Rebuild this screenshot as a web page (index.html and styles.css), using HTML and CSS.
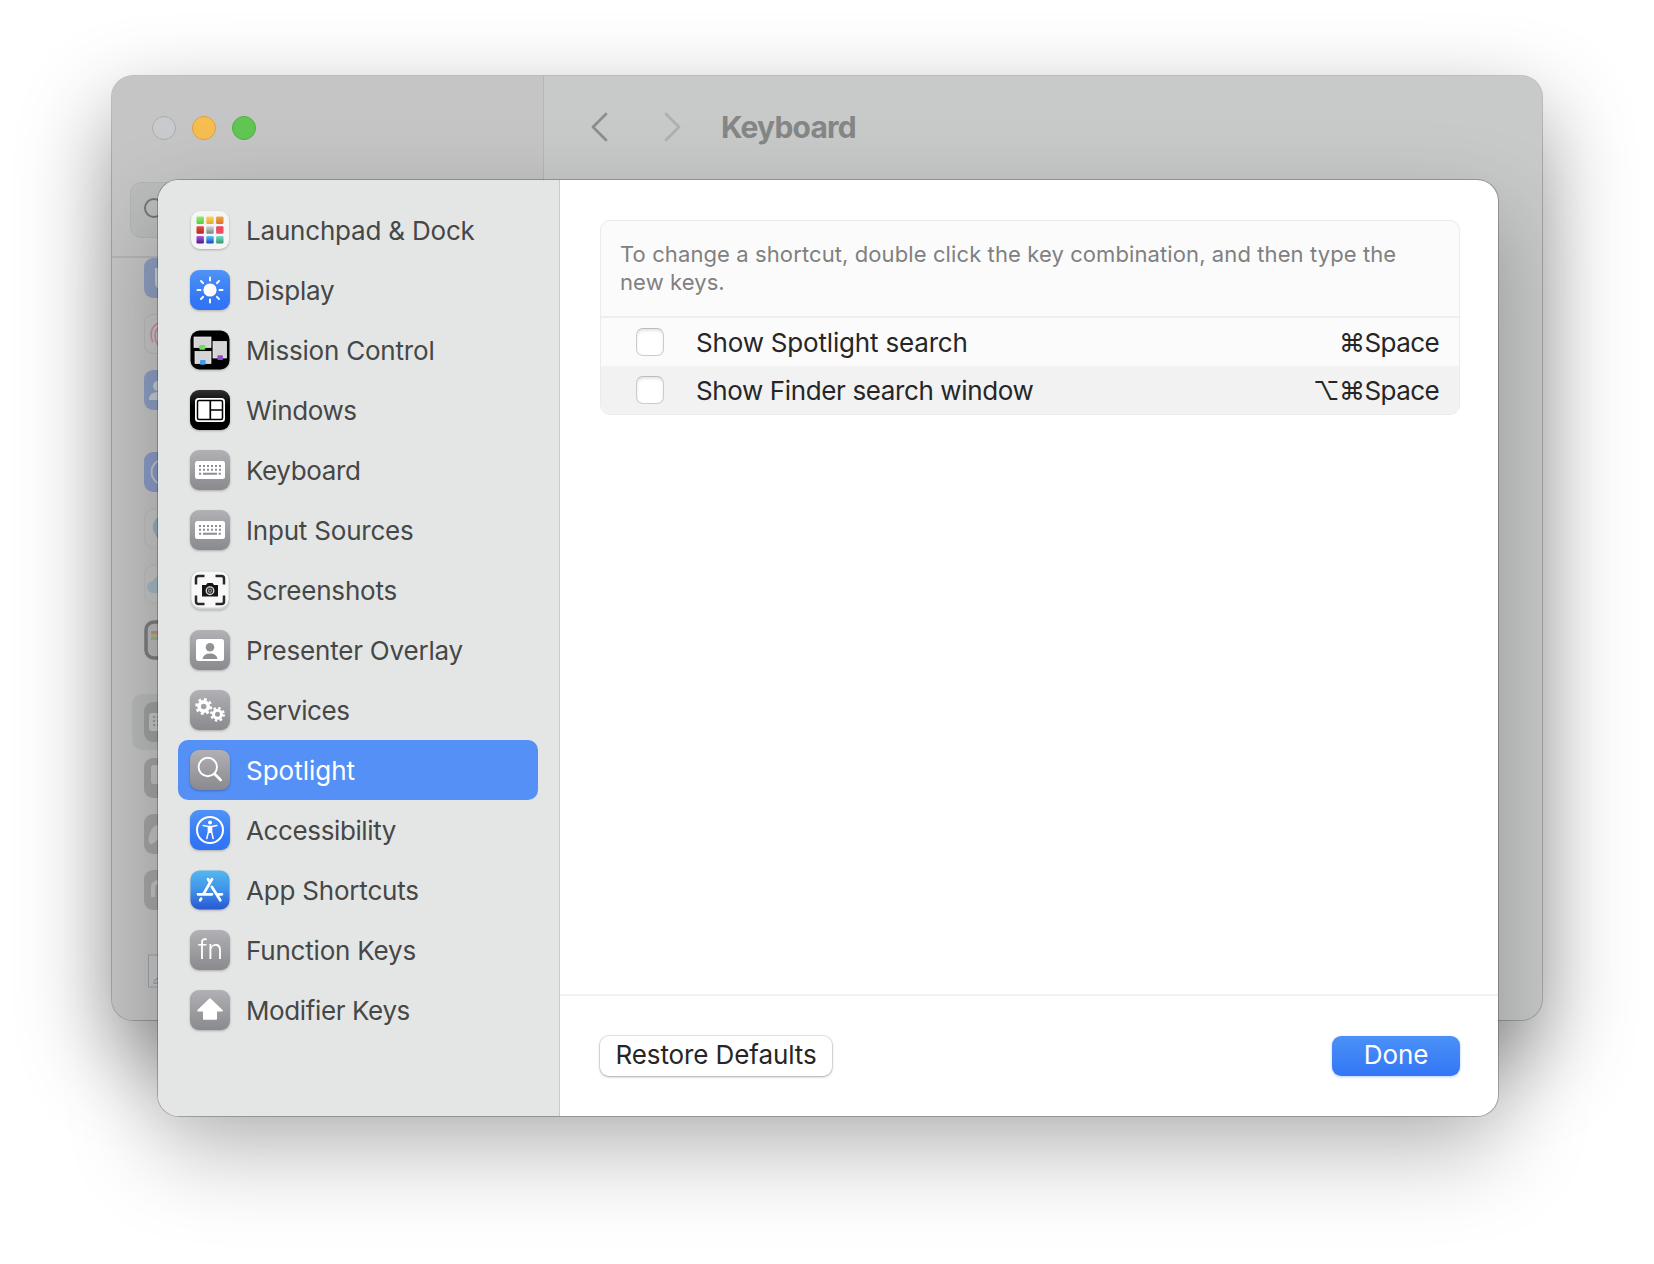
FILE: index.html
```html
<!DOCTYPE html>
<html lang="en">
<head>
    <meta charset="UTF-8">
    <meta name="viewport" content="width=device-width, initial-scale=1.0">
    <title>Keyboard</title>
    <link rel="stylesheet" href="styles.css">
</head>
<body>
    <!-- Settings window behind the sheet -->
    <div class="window">
        <div class="window-sidebar">
            <div class="lights">
                <span class="light"></span>
                <span class="light yellow"></span>
                <span class="light green"></span>
            </div>
            <div class="search">
                <svg width="30" height="30" viewBox="0 0 30 30" fill="none" stroke="#747675" stroke-width="2"><circle cx="10" cy="10" r="9"/><path d="M17 17l7 7"/></svg>
            </div>
            <div class="back-list">
                <div class="back-group">
                    <div class="back-row"><svg class="back-icon" viewBox="0 0 40 40"><rect width="40" height="40" rx="9" fill="#8d9fc0"/><path d="M13 10v14q0 6 7 6" fill="none" stroke="#c9cdd5" stroke-width="4"/></svg></div>
                    <div class="back-row"><svg class="back-icon" viewBox="0 0 40 40"><rect x=".5" y=".5" width="39" height="39" rx="9" fill="#c6c6c6" stroke="#b8b8b8"/><g fill="none" stroke="#c88f9a" stroke-width="1.6"><path d="M16 8q-9 4-9 13 0 4 2 7M17 12q-6 3-6 10 0 5 3 9M18 16q-3 2-3 7 0 5 2 9"/></g></svg></div>
                    <div class="back-row"><svg class="back-icon" viewBox="0 0 40 40"><rect width="40" height="40" rx="9" fill="#8d9fc4"/><circle cx="14" cy="16" r="5" fill="#c4cad6"/><path d="M5 30q0-8 9-8t9 8z" fill="#c4cad6"/></svg></div>
                </div>
                <div class="back-group">
                    <div class="back-row"><svg class="back-icon" viewBox="0 0 40 40"><rect width="40" height="40" rx="9" fill="#8b9cc6"/><circle cx="20" cy="20" r="12.5" fill="none" stroke="#c0c5d0" stroke-width="2"/></svg></div>
                    <div class="back-row"><svg class="back-icon" viewBox="0 0 40 40"><rect x="1" y="1" width="39" height="39" rx="9" fill="#c6c6c6" stroke="#bbb"/><path d="M20 7a12 12 0 0 0-8 20l8 1z" fill="#93b0c2"/><path d="M12 27q3 6 9 6v-6z" fill="#9583b3"/></svg></div>
                    <div class="back-row"><svg class="back-icon" viewBox="0 0 40 40"><rect x="1" y="1" width="39" height="38" rx="9" fill="#c6c6c6" stroke="#bbb"/><path d="M9 29a6 6 0 0 1 0-12 6 6 0 0 1 8-4v16z" fill="#a5b9c5"/></svg></div>
                    <div class="back-row"><svg class="back-icon" viewBox="0 0 40 40"><rect x="2" y="2" width="37" height="36" rx="8" fill="#bbb" stroke="#7e7e7e" stroke-width="3.5"/><path d="M7 11h12v3H7z" fill="#b89488"/><path d="M7 14h12v3H7z" fill="#bfb186"/><path d="M7 17h12v3H7z" fill="#93b397"/></svg></div>
                </div>
                <div class="back-group">
                    <div class="back-row current"><svg class="back-icon" viewBox="0 0 40 40"><rect width="40" height="40" rx="9" fill="#a0a2a2"/><rect x="5" y="11" width="30" height="18" rx="3" fill="#c4c6c5"/><path d="M9 15h2M9 19h2M9 23h2M13 15h2M13 19h2M13 23h2" stroke="#9a9c9c" stroke-width="2"/></svg></div>
                    <div class="back-row"><svg class="back-icon" viewBox="0 0 40 40"><rect width="40" height="40" rx="9" fill="#a4a4a4"/><rect x="7" y="7" width="26" height="19" rx="3" fill="#c3c3c3"/></svg></div>
                    <div class="back-row"><svg class="back-icon" viewBox="0 0 40 40"><rect width="40" height="40" rx="9" fill="#a6a6a6"/><path d="M6 30q-3-3 0-11 3-8 8-8v14q-4 5-8 5z" fill="#c3c3c3"/></svg></div>
                    <div class="back-row"><svg class="back-icon" viewBox="0 0 40 40"><rect width="40" height="40" rx="9" fill="#a8a8a8"/><path d="M9 27V18q0-6 6-6" fill="none" stroke="#c4c4c4" stroke-width="4"/></svg></div>
                </div>
                <svg class="back-doc" width="32" height="34" viewBox="0 0 32 34"><rect x=".5" y="1" width="31" height="32" fill="#c8c8c8" stroke="#9aa6ae"/><path d="M6 27l4-3M5 29h5" stroke="#8f8f8f"/></svg>
            </div>
        </div>
        <div class="window-main">
            <div class="toolbar">
                <svg width="90" height="30" viewBox="0 0 90 30" fill="none" stroke-width="2.8" stroke-linecap="round" stroke-linejoin="round"><path d="M15 2L2 15l13 13" stroke="#8c8d8d"/><path d="M75 2l13 13-13 13" stroke="#aeb0af"/></svg>
                <h1>Keyboard</h1>
            </div>
        </div>
    </div>

    <!-- Keyboard shortcuts sheet -->
    <div class="sheet">
        <ul class="sidebar">
            <li>
                <svg class="icon" viewBox="0 0 40 40">
                    <defs>
                        <linearGradient id="gray" x2="0" y2="1"><stop stop-color="#b1b0b5"/><stop offset="1" stop-color="#8a898e"/></linearGradient>
                        <linearGradient id="blue" x2="0" y2="1"><stop stop-color="#4f93f8"/><stop offset=".7" stop-color="#3478f6"/><stop offset="1" stop-color="#3073f5"/></linearGradient>
                        <linearGradient id="store" x2="0" y2="1"><stop stop-color="#55b7ef"/><stop offset=".5" stop-color="#3f92e9"/><stop offset="1" stop-color="#2857d2"/></linearGradient>
                        <linearGradient id="black" x2="0" y2="1"><stop stop-color="#303030"/><stop offset=".4" stop-color="#000"/></linearGradient>
                        <linearGradient id="c1" x2="0" y2="1"><stop stop-color="#8fee70"/><stop offset="1" stop-color="#53cf45"/></linearGradient>
                        <linearGradient id="c2" x2="0" y2="1"><stop stop-color="#f9d75c"/><stop offset="1" stop-color="#e9a53a"/></linearGradient>
                        <linearGradient id="c3" x2="0" y2="1"><stop stop-color="#eda743"/><stop offset="1" stop-color="#df7130"/></linearGradient>
                        <linearGradient id="c4" x2="0" y2="1"><stop stop-color="#e44c3c"/><stop offset="1" stop-color="#b3281f"/></linearGradient>
                        <linearGradient id="c5" x2="0" y2="1"><stop stop-color="#d2d6da"/><stop offset="1" stop-color="#7b8085"/></linearGradient>
                        <linearGradient id="c6" x2="0" y2="1"><stop stop-color="#e8465c"/><stop offset="1" stop-color="#ee5266"/></linearGradient>
                        <linearGradient id="c7" x2="0" y2="1"><stop stop-color="#a95be0"/><stop offset="1" stop-color="#4d1583"/></linearGradient>
                        <linearGradient id="c8" x2="0" y2="1"><stop stop-color="#55c6f8"/><stop offset="1" stop-color="#1c3fc0"/></linearGradient>
                        <linearGradient id="c9" x2="0" y2="1"><stop stop-color="#74dcd0"/><stop offset="1" stop-color="#3b9568"/></linearGradient>
                    </defs>
                    <rect x="1" y="1" width="38" height="38" rx="9" fill="#f5f5f5"/>
                    <g>
                        <rect x="6.500" y="6.500" width="7.400" height="7.400" rx="1.200" fill="url(#c1)"/><rect x="16.300" y="6.500" width="7.400" height="7.400" rx="1.200" fill="url(#c2)"/><rect x="26.100" y="6.500" width="7.400" height="7.400" rx="1.200" fill="url(#c3)"/>
                        <rect x="6.500" y="16.300" width="7.400" height="7.400" rx="1.200" fill="url(#c4)"/><rect x="16.300" y="16.300" width="7.400" height="7.400" rx="1.200" fill="url(#c5)"/><rect x="26.100" y="16.300" width="7.400" height="7.400" rx="1.200" fill="url(#c6)"/>
                        <rect x="6.500" y="26.100" width="7.400" height="7.400" rx="1.200" fill="url(#c7)"/><rect x="16.300" y="26.100" width="7.400" height="7.400" rx="1.200" fill="url(#c8)"/><rect x="26.100" y="26.100" width="7.400" height="7.400" rx="1.200" fill="url(#c9)"/>
                    </g>
                </svg>
                <span>Launchpad &amp; Dock</span>
            </li>
            <li>
                <svg class="icon" viewBox="0 0 40 40"><rect width="40" height="40" rx="9" fill="url(#blue)"/><circle cx="20" cy="20" r="6.600" fill="#fff"/><path d="M20 7.500v3M20 29.500v3M7.500 20h3M29.500 20h3M11 11l2.100 2.100M26.900 26.900L29 29M29 11l-2.100 2.100M13.100 26.900L11 29" stroke="#fff" stroke-width="2" stroke-linecap="round"/></svg>
                <span>Display</span>
            </li>
            <li>
                <svg class="icon" viewBox="0 0 40 40"><rect x=".5" y=".5" width="39" height="39" rx="9" fill="#000"/><g fill="#d5d5d5" stroke="#f2f2f2" stroke-width=".7"><rect x="4" y="7" width="17" height="10.500"/><rect x="5" y="21.500" width="16" height="12"/><rect x="23" y="11.500" width="13.500" height="16.500"/></g><rect x="9.300" y="15" width="6" height="4.800" rx="1" fill="#6fdd57"/><rect x="10" y="30" width="5.600" height="4.800" rx="1" fill="#3f9bf2"/><rect x="27.400" y="25.300" width="5.600" height="4.800" rx="1" fill="#9350cd"/></svg>
                <span>Mission Control</span>
            </li>
            <li>
                <svg class="icon" viewBox="0 0 40 40"><rect width="40" height="40" rx="9" fill="url(#black)"/><rect x="5" y="8" width="30" height="24" rx="3.500" fill="#fff"/><rect x="7.500" y="10.500" width="25" height="19" rx="1.500" fill="none" stroke="#000" stroke-width="1.500"/><path d="M20.300 10.500v19M20.300 20h12.200" stroke="#000" stroke-width="1.700"/></svg>
                <span class="tight">Windows</span>
            </li>
            <li>
                <svg class="icon" viewBox="0 0 40 40"><rect width="40" height="40" rx="9" fill="url(#gray)"/><rect x="5" y="11" width="30" height="18" rx="2.500" fill="#fff"/><path d="M9 16h23M9 19.800h23" stroke="#8e8d92" stroke-width="2" stroke-dasharray="2 2"/><path d="M9 23.700h2.200M13 23.700h14M28.600 23.700h2.200" stroke="#8e8d92" stroke-width="2"/></svg>
                <span class="tight">Keyboard</span>
            </li>
            <li>
                <svg class="icon" viewBox="0 0 40 40"><rect width="40" height="40" rx="9" fill="url(#gray)"/><rect x="5" y="11" width="30" height="18" rx="2.500" fill="#fff"/><path d="M9 16h23M9 19.800h23" stroke="#8e8d92" stroke-width="2" stroke-dasharray="2 2"/><path d="M9 23.700h2.200M13 23.700h14M28.600 23.700h2.200" stroke="#8e8d92" stroke-width="2"/></svg>
                <span>Input Sources</span>
            </li>
            <li>
                <svg class="icon" viewBox="0 0 40 40"><rect x="1" y="1" width="38" height="38.500" rx="9" fill="#d2d2d2"/><rect x="1.500" y="1.500" width="37" height="36" rx="8.500" fill="#f8f8f8"/><path d="M6 14.500V8.500q0-2.500 2.500-2.500h6M25.500 6h6q2.500 0 2.500 2.500v6M34 25.500v6q0 2.500-2.500 2.500h-6M14.500 34h-6Q6 34 6 31.500v-6" fill="none" stroke="#282828" stroke-width="2.500"/><path d="M12 15h4l1.500-2h5l1.500 2h4v11.500H12z" fill="#151515"/><circle cx="20" cy="20.700" r="3.800" fill="#333" stroke="#ddd" stroke-width="1.300"/><circle cx="20" cy="20.700" r="1.600" fill="none" stroke="#bbb" stroke-width=".8"/></svg>
                <span>Screenshots</span>
            </li>
            <li>
                <svg class="icon" viewBox="0 0 40 40"><rect width="40" height="40" rx="9" fill="url(#gray)"/><rect x="6" y="9" width="28" height="22" rx="2.500" fill="#fff"/><circle cx="20" cy="17.300" r="4.300" fill="#939297"/><path d="M12.500 29q1-5.500 7.500-5.500t7.500 5.500z" fill="#8e8d92"/></svg>
                <span>Presenter Overlay</span>
            </li>
            <li>
                <svg class="icon" viewBox="0 0 40 40"><rect width="40" height="40" rx="9" fill="url(#gray)"/><g fill="none" stroke="#fff"><circle cx="13.700" cy="16.500" r="4.600" stroke-width="3.600"/><circle cx="13.700" cy="16.500" r="7.300" stroke-width="2.400" stroke-dasharray="2.870 2.863"/><circle cx="27.500" cy="24.300" r="4" stroke-width="3"/><circle cx="27.500" cy="24.300" r="6.300" stroke-width="2.200" stroke-dasharray="2.470 2.478"/></g></svg>
                <span class="tight">Services</span>
            </li>
            <li class="selected">
                <svg class="icon" viewBox="0 0 40 40"><rect width="40" height="40" rx="9" fill="url(#gray)"/><circle cx="17.800" cy="17" r="9.200" fill="none" stroke="#fff" stroke-width="1.900"/><path d="M24.700 23.900l6 6" stroke="#fff" stroke-width="2.800" stroke-linecap="round"/></svg>
                <span>Spotlight</span>
            </li>
            <li>
                <svg class="icon" viewBox="0 0 40 40"><rect width="40" height="40" rx="9" fill="url(#blue)"/><circle cx="20" cy="20" r="13" fill="none" stroke="#fff" stroke-width="2"/><circle cx="20" cy="12.600" r="2" fill="#fff"/><path d="M13.200 15.600l5 1h3.600l5-1M18.400 16.500v5.500l-1.600 6.500M21.600 16.500V22l1.600 6.500" fill="none" stroke="#fff" stroke-width="1.500" stroke-linecap="round"/><path d="M18 16.500h4v6.500h-4z" fill="#fff"/></svg>
                <span class="tight">Accessibility</span>
            </li>
            <li>
                <svg class="icon" viewBox="0 0 40 40"><rect x=".5" y=".5" width="39" height="39" rx="9" fill="url(#store)"/><g stroke="#fff" stroke-width="2.700" stroke-linecap="round"><path d="M22 9.200L13.800 23.500M18 9.200l2 3.500M21.800 16.800l8.500 13.500M8 24.300h14M28.200 24.300H32M11.200 28.600l-1 1.700"/></g></svg>
                <span>App Shortcuts</span>
            </li>
            <li>
                <svg class="icon" viewBox="0 0 40 40"><rect width="40" height="40" rx="9" fill="url(#gray)"/><text class="fn" x="20.500" y="28.700" text-anchor="middle">fn</text></svg>
                <span>Function Keys</span>
            </li>
            <li>
                <svg class="icon" viewBox="0 0 40 40"><rect width="40" height="40" rx="9" fill="url(#gray)"/><path d="M20 9L32 20.600H26.200V29H13.800V20.600H8z" fill="#fff" stroke="#fff" stroke-width="1.600" stroke-linejoin="round"/></svg>
                <span class="tight">Modifier Keys</span>
            </li>
        </ul>

        <div class="content">
            <div class="panel-area">
                <div class="panel">
                    <p class="hint">To change a shortcut, double click the key combination, and then type the<br>new keys.</p>
                    <label class="shortcut">
                        <input type="checkbox">
                        <span class="name">Show Spotlight search</span>
                        <span class="keys">⌘Space</span>
                    </label>
                    <label class="shortcut">
                        <input type="checkbox">
                        <span class="name tight">Show Finder search window</span>
                        <span class="keys">⌥⌘Space</span>
                    </label>
                </div>
            </div>
            <div class="footer">
                <button class="restore-btn">Restore Defaults</button>
                <button class="done-btn">Done</button>
            </div>
        </div>
    </div>
</body>
</html>
```

FILE: styles.css
```css
* {
    box-sizing: border-box;
}
body {
    margin: 0;
    height: 1264px;
    padding: 76px 112px 0;
    background: #fff;
    font-family: Inter, "Liberation Sans", sans-serif;
    font-size: 26px;
    overflow: hidden;
    position: relative;
}

/* Window behind the sheet */
.window {
    display: flex;
    width: 1430px;
    height: 944px;
    border-radius: 21px;
    overflow: hidden;
    background: #c8cac9;
    box-shadow: 0 0 0 1px rgba(0, 0, 0, 0.2), 0 36px 90px rgba(0, 0, 0, 0.42);
}
.window-sidebar {
    width: 432px;
    padding: 40px 20px 0;
    background: #c5c5c5;
    border-right: 1px solid #b5b7b6;
}
.lights {
    display: flex;
    gap: 16px;
    padding-left: 20px;
}
.light {
    width: 24px;
    height: 24px;
    border-radius: 50%;
    background: #c8cacd;
    border: 1px solid #aaacae;
}
.yellow {
    background: #f6be50;
    border-color: #dfa33e;
}
.green {
    background: #62c655;
    border-color: #51ad43;
}
.search {
    height: 56px;
    margin: 42px 0 18px -2px;
    padding: 15px 13px;
    border-radius: 11px;
    background: #bbbebc;
    border: 1px solid #b3b6b4;
}
.search svg {
    display: block;
}
.back-list {
    margin: 0 -20px;
    padding-left: 20px;
    border-top: 2px solid #b5b5b5;
}
.back-group {
    margin-bottom: 26px;
}
.back-group:first-child {
    margin-top: -8px;
}
.back-row {
    height: 56px;
    padding: 8px 12px;
    width: 392px;
    border-radius: 10px;
}
.current {
    background: #b9bcba;
}
.back-icon {
    display: block;
    width: 40px;
    height: 40px;
}
.back-doc {
    display: block;
    margin: 36px 0 0 16px;
}
.toolbar {
    display: flex;
    align-items: center;
    height: 102px;
    padding-left: 47px;
}
h1 {
    margin: 0 0 0 40px;
    font-size: 30px;
    font-weight: 700;
    letter-spacing: -0.8px;
    color: #858686;
}

/* Sheet */
.sheet {
    position: absolute;
    left: 158px;
    top: 180px;
    display: flex;
    width: 1340px;
    height: 936px;
    border-radius: 21px;
    background: #fff;
    box-shadow: 0 0 0 1px rgba(0, 0, 0, 0.24), 0 36px 90px rgba(0, 0, 0, 0.27);
}
.sidebar {
    width: 402px;
    margin: 0;
    padding: 20px;
    list-style: none;
    background: #e4e6e5;
    border-right: 1px solid #c9cbca;
    border-radius: 21px 0 0 21px;
}
.sidebar li {
    display: flex;
    align-items: center;
    gap: 16px;
    width: 360px;
    height: 60px;
    padding-left: 12px;
    border-radius: 10px;
    color: #464747;
    letter-spacing: -0.2px;
}
.sidebar .selected {
    background: #5590f6;
    color: #fff;
    letter-spacing: 0;
}
.sidebar .tight,
.shortcut .tight {
    letter-spacing: -0.38px;
}
.icon {
    display: block;
    width: 40px;
    height: 40px;
    filter: drop-shadow(0 1px 1px rgba(0, 0, 0, 0.25));
}
.fn {
    font-size: 27px;
    font-weight: 300;
    letter-spacing: 0;
    fill: #fff;
}
.content {
    flex: 1;
    display: flex;
    flex-direction: column;
}
.panel-area {
    flex: 1;
    padding: 40px 38px 0 40px;
}
.panel {
    border: 1px solid #ebebeb;
    border-radius: 10px;
    background: #fbfbfb;
    overflow: hidden;
}
.hint {
    margin: 0;
    height: 97px;
    padding: 19px 19px 0;
    border-bottom: 2px solid #eeeeee;
    font-size: 22px;
    line-height: 28px;
    letter-spacing: 0.1px;
    color: #808080;
    white-space: nowrap;
}
.shortcut {
    display: flex;
    align-items: center;
    height: 48px;
    padding: 0 20px 0 35px;
    color: #262626;
    letter-spacing: -0.18px;
}
.shortcut + .shortcut {
    background: #f2f2f2;
}
.shortcut input {
    appearance: none;
    width: 28px;
    height: 28px;
    margin: 0 32px 0 0;
    border: 1px solid #cbcbcb;
    border-top-color: #bcbcbc;
    border-radius: 7px;
    background: #fff;
    box-shadow: inset 0 2px 3px rgba(0, 0, 0, 0.1);
}
.keys {
    margin-left: auto;
    letter-spacing: -0.6px;
}
.footer {
    display: flex;
    justify-content: space-between;
    height: 122px;
    padding: 40px 38px 0 40px;
    border-top: 2px solid #f1f1f1;
}
button {
    height: 40px;
    padding: 0 0 3px;
    border: none;
    border-radius: 9px;
    font: inherit;
    letter-spacing: -0.1px;
}
.restore-btn {
    width: 232px;
    background: #fff;
    color: #262626;
    box-shadow: 0 0 0 1px rgba(0, 0, 0, 0.08), 0 1px 3px rgba(0, 0, 0, 0.28);
}
.done-btn {
    width: 128px;
    background: linear-gradient(#4b91f7, #3376f6);
    color: #fff;
    box-shadow: 0 1px 3px rgba(51, 118, 246, 0.35);
}
```
